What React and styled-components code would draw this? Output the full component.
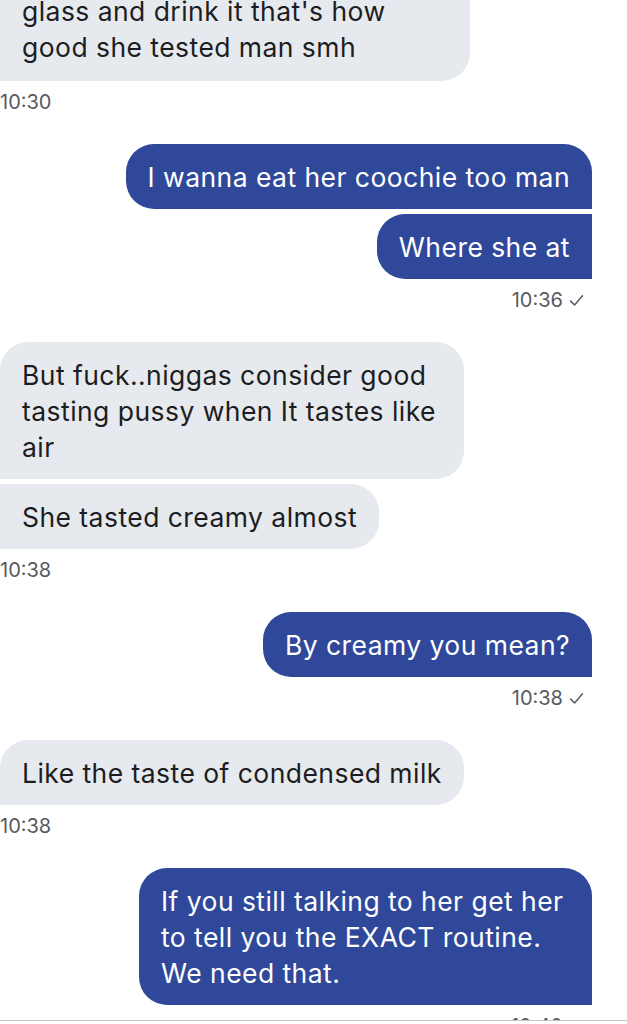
import React, { useLayoutEffect, useRef, useState } from "react";
import styled, { createGlobalStyle } from "styled-components";

const GlobalStyle = createGlobalStyle`
  html, body {
    margin: 0;
    padding: 0;
    background: #ffffff;
    overflow: hidden;
  }
  body {
    font-family: Inter, "Liberation Sans", Arial, sans-serif;
    -webkit-font-smoothing: antialiased;
  }
`;

const groups = [
  {
    out: false,
    time: "10:30",
    top: true,
    messages: ["glass and drink it that's how\ngood she tested man smh"],
  },
  {
    out: true,
    time: "10:36",
    messages: ["I wanna eat her coochie too man", "Where she at"],
  },
  {
    out: false,
    time: "10:38",
    messages: [
      "But fuck..niggas consider good tasting pussy when It tastes like air",
      "She tasted creamy almost",
    ],
  },
  { out: true, time: "10:38", messages: ["By creamy you mean?"] },
  { out: false, time: "10:38", messages: ["Like the taste of condensed milk"] },
  {
    out: true,
    time: "10:40",
    messages: [
      "If you still talking to her get her to tell you the EXACT routine. We need that.",
    ],
  },
];

// shrink a wrapped bubble to its widest line, like the iOS bubbles do
function Message({ text, out, first, cut }) {
  const textRef = useRef(null);
  const [width, setWidth] = useState(null);

  useLayoutEffect(() => {
    if (cut) return;
    const rects = Array.from(textRef.current.getClientRects());
    if (rects.length > 1) {
      const widest = Math.max(...rects.map((r) => r.width));
      setWidth(Math.ceil(widest) + 50);
    }
  }, [text, cut]);

  return (
    <Bubble
      $out={out}
      $first={first}
      $cut={cut}
      style={width ? { width } : undefined}
    >
      <span ref={textRef}>{text}</span>
    </Bubble>
  );
}

export default function App() {
  return (
    <>
      <GlobalStyle />
      <Screen>
        <Thread>
          {groups.map((group, gi) => (
            <Group key={gi} $out={group.out} $top={group.top}>
              {group.messages.map((text, mi) => (
                <Message
                  key={mi}
                  text={text}
                  out={group.out}
                  first={mi === 0}
                  cut={group.top}
                />
              ))}
              <Stamp $out={group.out}>
                {group.time}
                {group.out && (
                  <Check viewBox="0 0 16 16">
                    <path d="M2.5 8.6 L6.2 12.2 L13.6 3.6" />
                  </Check>
                )}
              </Stamp>
            </Group>
          ))}
        </Thread>
        <InputBar />
      </Screen>
    </>
  );
}

const Screen = styled.div`
  position: relative;
  width: 627px;
  height: 1024px;
  overflow: hidden;
  background: #fff;
`;

const Thread = styled.div`
  display: flex;
  flex-direction: column;
  gap: 30px;
  padding-right: 35px;
`;

const Group = styled.div`
  display: flex;
  flex-direction: column;
  align-items: ${(p) => (p.$out ? "flex-end" : "flex-start")};
  gap: 5px;
  margin-top: ${(p) => (p.$top ? "-23px" : "0")};
`;

const Bubble = styled.div`
  box-sizing: border-box;
  max-width: 470px;
  padding: 15px 22px 14px;
  font-size: 26.5px;
  line-height: 36px;
  letter-spacing: 0.45px;
  white-space: pre-line;
  color: ${(p) => (p.$out ? "#ffffff" : "#1c1d21")};
  background: ${(p) => (p.$out ? "#30489a" : "#e6e9ee")};
  border-radius: ${(p) =>
    p.$out
      ? `28px ${p.$first ? "28px" : "0"} 0 28px`
      : `${p.$first && !p.$cut ? "28px" : "0"} 28px 28px 0`};
  ${(p) => p.$cut && "width: 472px; padding-top: 16px; padding-bottom: 16px;"}
`;

const Stamp = styled.div`
  display: flex;
  align-items: center;
  gap: 5px;
  margin-top: 4px;
  margin-right: ${(p) => (p.$out ? "7px" : "0")};
  font-size: 20px;
  line-height: 24px;
  color: #575a61;
`;

const Check = styled.svg`
  width: 17px;
  height: 17px;
  fill: none;
  stroke: #575a61;
  stroke-width: 1.4;
  stroke-linecap: round;
  stroke-linejoin: round;
`;

const InputBar = styled.div`
  position: absolute;
  left: 0;
  right: 0;
  bottom: 0;
  height: 3px;
  background: #ffffff;
  border-top: 1px solid #c4c6cb;
`;
